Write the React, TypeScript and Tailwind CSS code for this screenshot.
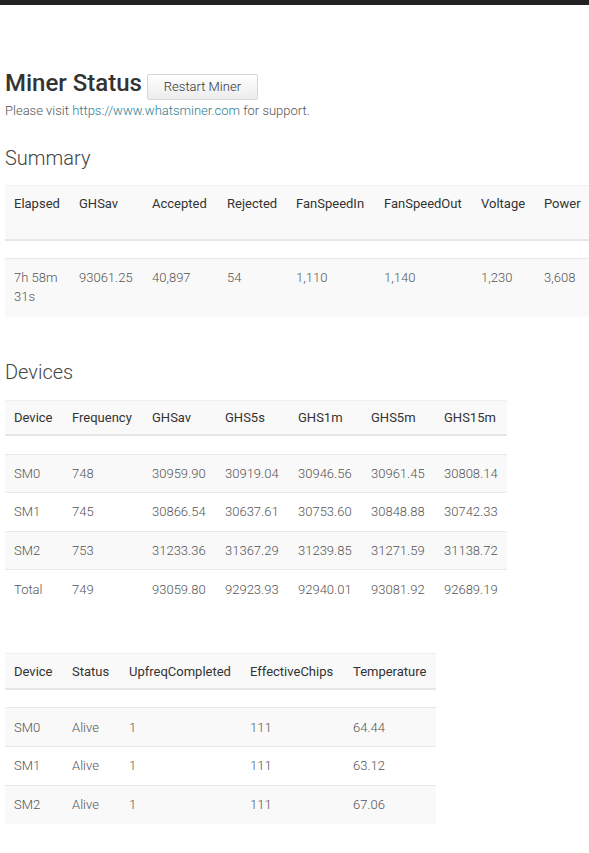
import React from 'react'

const summaryCols = [
  { name: 'Elapsed', w: 65 },
  { name: 'GHSav', w: 73 },
  { name: 'Accepted', w: 75 },
  { name: 'Rejected', w: 69 },
  { name: 'FanSpeedIn', w: 88 },
  { name: 'FanSpeedOut', w: 97 },
  { name: 'Voltage', w: 63 },
  { name: 'Power', w: 60 },
]

const summaryRow = ['7h 58m 31s', '93061.25', '40,897', '54', '1,110', '1,140', '1,230', '3,608']

const deviceCols = [
  { name: 'Device', w: 58 },
  { name: 'Frequency', w: 80 },
  { name: 'GHSav', w: 73 },
  { name: 'GHS5s', w: 73 },
  { name: 'GHS1m', w: 73 },
  { name: 'GHS5m', w: 73 },
  { name: 'GHS15m', w: 72 },
]

const deviceRows = [
  ['SM0', '748', '30959.90', '30919.04', '30946.56', '30961.45', '30808.14'],
  ['SM1', '745', '30866.54', '30637.61', '30753.60', '30848.88', '30742.33'],
  ['SM2', '753', '31233.36', '31367.29', '31239.85', '31271.59', '31138.72'],
  ['Total', '749', '93059.80', '92923.93', '92940.01', '93081.92', '92689.19'],
]

const chipCols = [
  { name: 'Device', w: 58 },
  { name: 'Status', w: 57 },
  { name: 'UpfreqCompleted', w: 121 },
  { name: 'EffectiveChips', w: 103 },
  { name: 'Temperature', w: 92 },
]

const chipRows = [
  ['SM0', 'Alive', '1', '111', '64.44'],
  ['SM1', 'Alive', '1', '111', '63.12'],
  ['SM2', 'Alive', '1', '111', '67.06'],
]

type Col = { name: string; w: number }

function StatusTable({ cols, rows }: { cols: Col[]; rows: string[][] }) {
  const width = cols.reduce((a, c) => a + c.w, 0)
  return (
    <table className="table-fixed border-collapse text-[13px]" style={{ width }}>
      <colgroup>
        {cols.map((c) => (
          <col key={c.name} style={{ width: c.w }} />
        ))}
      </colgroup>
      <thead>
        <tr className="bg-[#f9f9f9] border-t border-[#f0f0f0] border-b-2 border-b-[#e6e6e6]">
          {cols.map((c) => (
            <th key={c.name} className="h-[35px] px-[9px] text-left align-middle font-normal text-[#333] leading-[19px] whitespace-nowrap">
              {c.name}
            </th>
          ))}
        </tr>
      </thead>
      <tbody>
        <tr className="h-[19px]">
          <td colSpan={cols.length}></td>
        </tr>
        {rows.map((r, i) => (
          <tr key={i} className={`border-t border-[#e8e8e8] ${i % 2 === 0 ? 'bg-[#f9f9f9]' : 'bg-white'}`}>
            {r.map((v, j) => (
              <td key={j} className="h-[38.6px] px-[9px] align-middle font-light text-[#555] leading-[19px]">
                {v}
              </td>
            ))}
          </tr>
        ))}
      </tbody>
    </table>
  )
}

export default function App() {
  return (
    <div className="min-h-screen bg-white font-['Roboto','Liberation_Sans',sans-serif] overflow-hidden">
      <div className="h-[5px] bg-[#222]"></div>
      <div className="px-[5px]">
        <div className="flex items-start gap-[5px] mt-[60px]">
          <h1 className="text-[24px] leading-[36px] font-medium text-[#333]">Miner Status</h1>
          <button className="mt-[9px] h-[26px] w-[111px] rounded-[2px] border border-[#d6d6d6] bg-gradient-to-b from-white to-[#ececec] text-[13px] font-light text-[#333]">
            Restart Miner
          </button>
        </div>
        <p className="text-[13px] leading-[18px] pt-[1px] font-light text-[#555]">
          Please visit <a className="text-[#2b7d8f]">https://www.whatsminer.com</a> for support.
        </p>

        <h3 className="mt-[24px] mb-[13px] text-[20px] leading-[28px] font-light text-[#444]">Summary</h3>
        <table className="table-fixed border-collapse text-[13px]" style={{ width: 590 }}>
          <colgroup>
            {summaryCols.map((c) => (
              <col key={c.name} style={{ width: c.w }} />
            ))}
          </colgroup>
          <thead>
            <tr className="bg-[#f9f9f9] border-t border-[#f0f0f0] border-b-2 border-b-[#e6e6e6]">
              {summaryCols.map((c) => (
                <th key={c.name} className="h-[54px] px-[9px] pt-[8px] text-left align-top font-normal text-[#333] leading-[19px] whitespace-nowrap">
                  {c.name}
                </th>
              ))}
            </tr>
          </thead>
          <tbody>
            <tr className="h-[19px]">
              <td colSpan={summaryCols.length}></td>
            </tr>
            <tr className="border-t border-[#e8e8e8] bg-[#f9f9f9]">
              {summaryRow.map((v, j) => (
                <td key={j} className="h-[58px] px-[9px] pt-[9px] pb-[10px] align-top font-light text-[#555] leading-[19px]">
                  {v}
                </td>
              ))}
            </tr>
          </tbody>
        </table>

        <h3 className="mt-[41px] mb-[14px] text-[20px] leading-[28px] font-light text-[#444]">Devices</h3>
        <StatusTable cols={deviceCols} rows={deviceRows} />

        <div className="mt-[45px]">
          <StatusTable cols={chipCols} rows={chipRows} />
        </div>
      </div>
    </div>
  )
}
